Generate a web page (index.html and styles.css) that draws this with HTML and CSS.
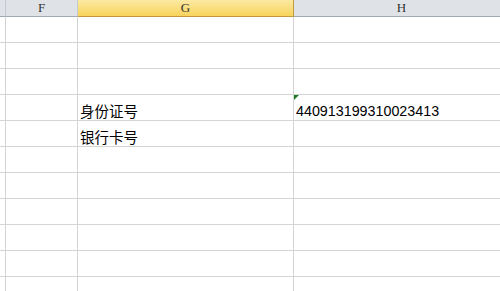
FILE: index.html
```html
<!DOCTYPE html>
<html lang="zh-CN">
<head>
    <meta charset="UTF-8">
    <title>工作表</title>
    <link rel="stylesheet" href="styles.css">
</head>
<body>
    <div class="sheet">
        <div class="head corner"></div>
        <div class="head">F</div>
        <div class="head selected">G</div>
        <div class="head">H</div>

        <div class="rowhead"></div><div class="cell"></div><div class="cell"></div><div class="cell"></div>
        <div class="rowhead"></div><div class="cell"></div><div class="cell"></div><div class="cell"></div>
        <div class="rowhead"></div><div class="cell"></div><div class="cell"></div><div class="cell"></div>
        <div class="rowhead"></div><div class="cell"></div><div class="cell text">身份证号</div><div class="cell num flagged">440913199310023413</div>
        <div class="rowhead"></div><div class="cell"></div><div class="cell text">银行卡号</div><div class="cell"></div>
        <div class="rowhead"></div><div class="cell"></div><div class="cell"></div><div class="cell"></div>
        <div class="rowhead"></div><div class="cell"></div><div class="cell"></div><div class="cell"></div>
        <div class="rowhead"></div><div class="cell"></div><div class="cell"></div><div class="cell"></div>
        <div class="rowhead"></div><div class="cell"></div><div class="cell"></div><div class="cell"></div>
        <div class="rowhead"></div><div class="cell"></div><div class="cell"></div><div class="cell"></div>
        <div class="rowhead"></div><div class="cell"></div><div class="cell"></div><div class="cell"></div>
    </div>
</body>
</html>
```

FILE: styles.css
```css
body {
    margin: 0;
    overflow: hidden;
    background-color: #fff;
    font-family: "Noto Sans CJK SC", sans-serif;
}
.sheet {
    display: grid;
    grid-template-columns: 6px 72px 216px 216px;
    grid-template-rows: 17px;
    grid-auto-rows: 26px;
    width: 510px;
}
.head {
    box-sizing: border-box;
    background-color: #dfe3e8;
    border-right: 1px solid #c5cad1;
    border-bottom: 1px solid #9fa8b3;
    font-family: "Liberation Serif", serif;
    font-size: 13px;
    color: #333;
    text-align: center;
    line-height: 16px;
}
.head.selected {
    background: linear-gradient(#fbe9a3, #f8d45c);
    border-right-color: #c29a3e;
    border-bottom-color: #c29a3e;
}
.rowhead,
.cell {
    box-sizing: border-box;
    border-right: 1px solid #d4d4d4;
    border-bottom: 1px solid #d4d4d4;
}
.text,
.num {
    display: flex;
    align-items: flex-end;
    padding-left: 2px;
    color: #000;
    white-space: nowrap;
}
.text {
    font-size: 14.5px;
    line-height: 18px;
}
.num {
    font-family: "Liberation Sans", sans-serif;
    font-size: 14.3px;
    line-height: 16px;
    padding-bottom: 1px;
}
.flagged {
    position: relative;
}
.flagged::before {
    content: "";
    position: absolute;
    left: 0;
    top: 0;
    border-top: 5px solid #1f7a26;
    border-right: 5px solid transparent;
}
```
